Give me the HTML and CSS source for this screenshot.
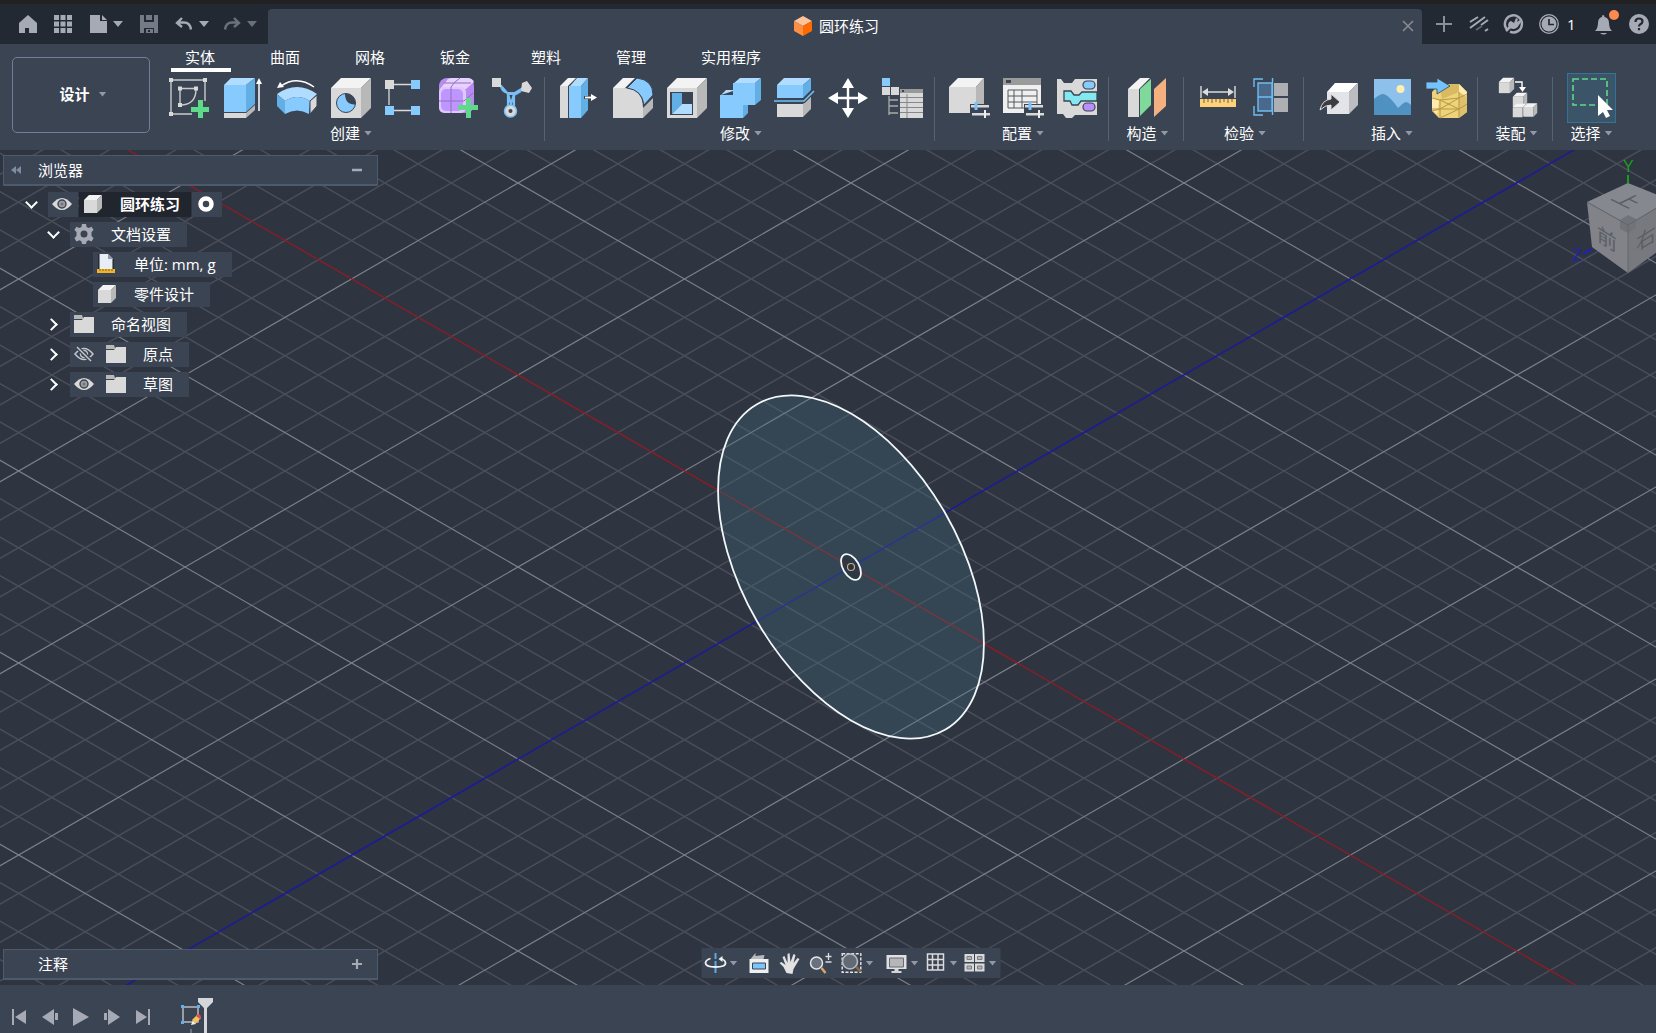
FILE: index.html
```html
<!DOCTYPE html>
<html lang="zh-CN">
<head>
<meta charset="utf-8">
<title>圆环练习</title>
<meta name="viewport" content="width=device-width, initial-scale=1">
<link rel="stylesheet" href="styles.css">
</head>
<body>
<svg class="defs" aria-hidden="true">
  <symbol id="cube" viewBox="0 0 20 20"><path class="g1" d="M1 6 6 1h13l-5 5z"/><path class="g2" d="M1 6h13v13H1z"/><path class="g3" d="M14 6l5-5v13l-5 5z"/></symbol>
  <symbol id="folder" viewBox="0 0 20 20"><path class="g3" d="M0 1h8l1 3v1H0z"/><path class="g2" d="M0 6h8l2-3h10v16H0z"/></symbol>
  <symbol id="eye" viewBox="0 0 20 20"><path class="g2" d="M0 10Q10-2 20 10 10 22 0 10z"/><circle cx="10" cy="10" r="4" fill="#9a9b9e" stroke="#3b4453" stroke-width="1.4"/><circle cx="10" cy="10" r="1.5" fill="#707680"/></symbol>
</svg>

<header class="titlebar">
  <div class="quick">
    <button aria-label="主页"><svg viewBox="0 0 18 18" width="18" height="18"><path d="M9 0 0 8v10h6v-5h4v5h8V8z" fill="#a6aab4"/></svg></button>
    <button aria-label="应用"><svg viewBox="0 0 18 18" width="18" height="18"><path d="M0 0h5v5H0zM6.500 0h5v5h-5zM13 0h5v5h-5zM0 6.500h5v5H0zM6.500 6.500h5v5h-5zM13 6.500h5v5h-5zM0 13h5v5H0zM6.500 13h5v5h-5zM13 13h5v5h-5z" fill="#a6aab4"/></svg></button>
    <button class="split" aria-label="文件"><svg viewBox="0 0 18 18" width="18" height="18"><path d="M1 0h10v6h7v12H1z" fill="#a6aab4"/><path d="M13 0l5 5h-5z" fill="#a6aab4"/></svg><span class="caret big"></span></button>
    <button aria-label="保存"><svg viewBox="0 0 18 18" width="18" height="18"><path d="M0 0h4v7h10V0h4v18h-4v-5H4v5H0zM6 0h6v5H6zM6 14h7v4H6z" fill="#747a86"/><path d="M8 15h2v2H8z" fill="#232933"/></svg></button>
    <div class="history">
      <button class="split" aria-label="撤消"><svg viewBox="0 0 18 18" width="18" height="18"><path d="M7 3 2 8l5 4M2 7.500h7q6 0 7 7" fill="none" stroke="#a6aab4" stroke-width="2.400"/></svg><span class="caret big"></span></button>
      <button class="split off" aria-label="重做"><svg viewBox="0 0 18 18" width="18" height="18"><path d="M11 3l5 5-5 4M16 7.500H9q-6 0-7 7" fill="none" stroke="#a6aab4" stroke-width="2.400"/></svg><span class="caret big"></span></button>
    </div>
  </div>
  <div class="doc-tab">
    <svg viewBox="0 0 18 20" width="18" height="20"><path d="M9 0l9 5-9 5-9-5z" fill="#ffc39c"/><path d="M0 5l9 5v10l-9-5z" fill="#ff8f45"/><path d="M18 5l-9 5v10l9-5z" fill="#ff6a00"/></svg>
    <h1>圆环练习</h1>
    <button class="close" aria-label="关闭"><svg viewBox="0 0 12 12" width="12" height="12"><path d="M1 1l10 10M11 1 1 11" stroke="#8d8d8f" stroke-width="1.500"/></svg></button>
  </div>
  <div class="status">
    <button aria-label="新建"><svg viewBox="0 0 20 20" width="20" height="20"><path d="M10 2v16M2 10h16" stroke="#8a8f9a" stroke-width="2"/></svg></button>
    <button aria-label="数据"><svg viewBox="0 0 20 20" width="20" height="20" stroke="#a6aab4" stroke-width="2" fill="none"><path d="M1 8l8-5M1 14 16 3M12 11l7-5M16 17l3-2"/><path d="M7 16l6-4" stroke="#5f6672"/></svg></button>
    <button aria-label="扩展"><svg viewBox="0 0 20 20" width="20" height="20"><path d="M3 15.500A8.500 8.500 0 1 1 6 17.700" fill="none" stroke="#a6aab4" stroke-width="2.500"/><path d="M2 17l5-5" stroke="#a6aab4" stroke-width="2.500"/><path d="M5 8l2-1 3 2 2-5 2 1-1 3 3-2 1 2-2 3q-2 4-6 4l-4-1-1-3z" fill="#a6aab4"/></svg></button>
    <button class="jobs" aria-label="作业状态 1"><svg viewBox="0 0 20 20" width="20" height="20"><circle cx="10" cy="10" r="9.300" fill="none" stroke="#a6aab4" stroke-width="1.300"/><circle cx="10" cy="10" r="7.500" fill="#a6aab4"/><path d="M10 5v5.500h5" stroke="#232933" stroke-width="1.700" fill="none"/></svg><span>1</span></button>
    <button class="bell" aria-label="通知"><svg viewBox="0 0 24 28" width="24" height="28"><path d="M13 5q1.500 0 1.500 2 4.500 1 4.500 6 0 5 3 8H5q3-3 3-8 0-5 4-6 0-2 1-2zM10 23h7q-3 3-7 0z" fill="#a6aab4"/><circle cx="24" cy="5" r="5" fill="#ff8a50"/></svg></button>
    <button aria-label="帮助"><svg viewBox="0 0 20 20" width="20" height="20"><circle cx="10" cy="10" r="10" fill="#a6aab4"/><path d="M6.500 8q0-3.500 3.500-3.500t3.500 3Q13.500 9 11 10.500q-1 .8-1 2M10 14v2.300" fill="none" stroke="#232933" stroke-width="2.200"/></svg></button>
  </div>
</header>

<section class="ribbon">
  <button class="workspace">设计<span class="caret"></span></button>
  <div class="ribbon-main">
    <nav class="tabs">
      <div class="tab-set"><button class="active">实体</button><button>曲面</button><button>网格</button><button>钣金</button></div>
      <div class="tab-set"><button>塑料</button><button>管理</button><button>实用程序</button></div>
    </nav>
    <div class="panels">
      <div class="panel">
        <div class="tools">
          <button aria-label="创建草图"><svg viewBox="0 0 40 40"><path d="M2 2h34v21M2 2v34h21M11 10.500h16M11 10.500V27M27 11q0 15-14 16" fill="none" stroke="#c9cacc" stroke-width="1.400"/><path class="g2" d="M0 0h4v4H0zM34 0h4v4h-4zM0 34h4v4H0zM9 8.500h4v4H9zM25 8.500h4v4h-4zM9 25h4v4H9z"/><path d="M29 22h5v7h6v5h-6v6h-5v-6h-7v-5h7z" fill="#5fd98a"/></svg></button>
          <button aria-label="拉伸"><svg viewBox="0 0 40 40"><path class="b1" d="M1 7l7-7h24l-9 7z"/><path class="b2" d="M1 7h22v27H1z"/><path class="b3" d="M23 7l9-7v26l-9 8z"/><path class="g2" d="M1 35h22v5H1z"/><path class="g3" d="M23 35l9-8v5l-9 8z"/><path d="M36 5v28" stroke="#fff" stroke-width="1.500"/><path d="M36 0l3 6h-6z" fill="#fff"/></svg></button>
          <button aria-label="旋转"><svg viewBox="0 0 40 40"><path d="M37 9Q20-3 4 8" fill="none" stroke="#fff" stroke-width="1.500"/><path d="M0 10l3-6 4 5z" fill="#fff"/><path class="b1" d="M0 16Q20 2 40 16l-7 7Q20 15 8 23z"/><path class="b2" d="M8 23q12-8 25 0l-1 13q-12-7-24 0z"/><path class="b3" d="M0 16l8 7v13l-8-8z"/><path class="g2" d="M33 23l7-6v11l-7 8z" stroke="#3b4453"/></svg></button>
          <button aria-label="孔"><svg viewBox="0 0 40 40"><path class="g1" d="M0 10 10 0h30L30 10z"/><path class="g2" d="M0 10h30v30H0z"/><path class="g3" d="M30 10 40 0v30L30 40z"/><circle class="b2" cx="15" cy="25" r="9.500" stroke="#3b4453"/><path d="M14 15.500a10 10 0 0 1 10.500 11Q14 27 14 15.500z" fill="#3b4453"/></svg></button>
          <button aria-label="阵列"><svg viewBox="0 0 40 40"><path d="M9 6.500h17M9 32.500h17M4 11v16" stroke="#d9d9d9" stroke-width="1.300"/><path class="g2" d="M0 2h9v9H0z"/><path class="b2" d="M26 2h9v9h-9zM0 28h9v9H0zM26 28h9v9h-9z"/></svg></button>
          <button aria-label="创建形状"><svg viewBox="0 0 40 40"><rect x="0" y="0" width="35" height="35" rx="8" fill="#b98af0"/><path d="M1 11 9 1q2-1 4-1h16q4 0 6 4l-8 7z" fill="#e7d2ff"/><rect x="0" y="9" width="27" height="26" rx="5" fill="#e0c8ff"/><rect x="2" y="11" width="22" height="22" rx="5" fill="#bf96ff"/><path d="M12 35V9Q15 4 21 0M0 23h25l9-8M5 5h27" fill="none" stroke="#8f70bb"/><path d="M27 20h5v7h7v5h-7v8h-5v-8h-8v-5h8z" fill="#5fd98a"/></svg></button>
          <button aria-label="衍生式设计"><svg viewBox="0 0 40 40"><path d="M8 7q0 6 7 8h7l8-5M9 9l6 7v14M28 13l-7 4v13M15 16l3 10 3-10z" fill="none" stroke="#79bff5" stroke-width="2.200"/><path class="g2" d="M-1 0h9v9h-9zM29 5l5-2 5 7-3 5-8-2z"/><circle cx="17.500" cy="33" r="6" class="g2" stroke="#79bff5" stroke-width="1.500"/><circle cx="17.500" cy="33" r="2" fill="#3b4453"/></svg></button>
        </div>
        <button class="panel-name">创建<span class="caret"></span></button>
      </div>
      <span class="rule"></span>
      <div class="panel">
        <div class="tools">
          <button aria-label="按拉"><svg viewBox="0 0 40 40"><path class="g1" d="M1 8l8-8h8l-8 8z"/><path class="g2" d="M1 8h8v32H1z"/><path class="b1" d="M11 8l7-8h11l-7 8z"/><path class="b2" d="M10 8h12v32H10z"/><path class="b3" d="M22 8l7-8v32l-7 8z"/><path d="M25 19.500h8v-3l6 3-6 3v-3" stroke="#3b4453" stroke-width="3" fill="none"/><path d="M26 19.500h8" stroke="#fff" stroke-width="1.800"/><path d="M32 16l6 3.500-6 3.500z" fill="#fff"/></svg></button>
          <button aria-label="圆角"><svg viewBox="0 0 40 40"><path class="g1" d="M0 10 10 0h12L12 10z"/><path class="g3" d="M30 30l10-10v10L30 40z"/><path class="g2" d="M0 10h10q20 0 20 20v10H0z"/><path class="b2" d="M14 10 24 0q16 2 16 17l-9 10Q29 12 14 10z" stroke="#3b4453"/></svg></button>
          <button aria-label="抽壳"><svg viewBox="0 0 40 40"><path class="g1" d="M0 10 10 0h30L30 10z"/><path class="g2" d="M0 10h30v30H0z"/><path class="g3" d="M30 10 40 0v30L30 40z"/><path d="M3 14h23v23H3z" fill="#3b4453"/><path class="b3" d="M5 15h10v11L5 36z"/><path class="b1" d="M5 36l10-10h10v10z"/></svg></button>
          <button aria-label="合并"><svg viewBox="0 0 40 40"><path class="b1" d="M0 17l5-5h8V5l6-5h21l-6 5v8H12z"/><path class="b2" d="M-1 17h13V5h22v22H22v13H-1z"/><path class="b3" d="M34 5l6-5v22l-6 5zM22 27h5v8l-5 5z"/></svg></button>
          <button aria-label="分割"><svg viewBox="0 0 40 40"><path class="b1" d="M2 7l7-7h27l-8 7z"/><path class="b2" d="M2 7h26v13H2z"/><path class="b3" d="M28 7l8-7v12l-8 8z"/><path class="g2" d="M2 26h26v13H2z"/><path class="g3" d="M28 26l8-8v13l-8 8z"/><path d="M-1 23h30l10-10" fill="none" stroke="#3b4453" stroke-width="4"/><path d="M-1 23h30l10-10" fill="none" stroke="#6fc0f7" stroke-width="1.600"/></svg></button>
          <button aria-label="移动"><svg viewBox="0 0 40 40"><path d="M19 3v34M3 20h32" stroke="#fff" stroke-width="2.400"/><path d="M19 0l6 10H13zM19 40l6-10H13zM-1 20l10-6v12zM39 20l-10-6v12z" fill="#fff"/></svg></button>
          <button aria-label="更改参数"><svg viewBox="0 0 40 40"><path class="b2" d="M-1 0h8v8h-8z"/><path class="g2" d="M-1 9h8v8h-8zM8 9h8v8H8zM17 11h23v29H17z"/><path d="M6 18v19M6 22h9M6 28h9M6 35h9" stroke="#aaa" stroke-width="1.300"/><path d="M17 11h23v4H17z" fill="#999"/><path d="M17 19.500h23M17 24.500h23M17 29.500h23M17 34.500h23M24 16v24" stroke="#85878b"/><path d="M19 12h2v2h-2z" fill="#3b4453"/></svg></button>
        </div>
        <button class="panel-name">修改<span class="caret"></span></button>
      </div>
      <span class="rule"></span>
      <div class="panel">
        <div class="tools">
          <button aria-label="配置设计"><svg viewBox="0 0 40 40"><path class="g1" d="M0 9 9 0h26l-8 9z"/><path class="g2" d="M0 9h27v26H0z"/><path class="g3" d="M27 9l8-9v27l-8 8z"/><path d="M21 26h19v15H21z" fill="#3b4453"/><path class="g2" d="M22 27h18v2.500H22zM23 35h18v2.500H23z"/><path d="M36 32v8" stroke="#eee" stroke-width="2"/><path d="M27 24v8" stroke="#79c3fc" stroke-width="3"/></svg></button>
          <button aria-label="配置表"><svg viewBox="0 0 40 40"><path fill="#efefef" d="M0 0h38v35H0z"/><path fill="#9a9a9a" d="M0 0h38v7H0z"/><path d="M3 2h5v3H3z" fill="#3b4453"/><path d="M5 12h29v18H5zM5 18h29M5 24h29M11 12v18M19 12v18" fill="none" stroke="#55595f"/><path d="M21 26h19v15H21z" fill="#3b4453"/><path class="g2" d="M22 27h18v2.500H22zM23 35h18v2.500H23z"/><path d="M36 32v8" stroke="#eee" stroke-width="2"/><path d="M27 24v8" stroke="#79c3fc" stroke-width="3"/></svg></button>
          <button aria-label="自动配置"><svg viewBox="0 0 40 40"><path class="g2" d="M0 1h4l3 4h8l3-4h22v36H18l-3 3H9l-3-4H0z"/><path d="M7 13h7l3 4h5l3-3h15v9H24l-3 4h-6l-2-4H7z" fill="#83e8f0" stroke="#3b4453" stroke-width="1.300"/><rect x="26" y="3" width="12" height="8" rx="4" class="b2" stroke="#3b4453" stroke-width="1.200"/><rect x="26" y="25" width="12" height="8" rx="4" fill="#b98fff" stroke="#3b4453" stroke-width="1.200"/></svg></button>
        </div>
        <button class="panel-name">配置<span class="caret"></span></button>
      </div>
      <span class="rule"></span>
      <div class="panel">
        <div class="tools">
          <button aria-label="构造平面"><svg viewBox="0 0 40 40"><path class="g1" d="M0 11 12 0h10L11 11z"/><path class="g2" d="M0 11h11v28H0z"/><path d="M12 11 23 1v26L12 38z" fill="#7fd99a"/><path d="M26 11 38 0v28L26 39z" fill="#f5b080"/></svg></button>
        </div>
        <button class="panel-name">构造<span class="caret"></span></button>
      </div>
      <span class="rule"></span>
      <div class="panel">
        <div class="tools">
          <button aria-label="测量"><svg viewBox="0 0 40 40"><path d="M3 8v12M37 8v12M6 14h28" stroke="#ddd" stroke-width="1.400"/><path d="M4 14l6-4v8zM36 14l-6-4v8z" fill="#ddd"/><path d="M2 21h36v8H2z" fill="#ffd27a"/><path d="M6 21v4M10 21v3M14 21v4M18 21v3M22 21v4M26 21v3M30 21v4M34 21v3" stroke="#6f6040"/></svg></button>
          <button aria-label="干涉"><svg viewBox="0 0 40 40"><path d="M6 5h14v28H6z" fill="#49688a"/><path d="M6 5h14v28H6zM6 19h14M11 1H2v8M2 28v9h9M20.500 0v37" fill="none" stroke="#6dbcf4" stroke-width="1.400"/><path d="M22 5h14v13H22zM22 20h14v14H22z" fill="#aeafb3"/></svg></button>
        </div>
        <button class="panel-name">检验<span class="caret"></span></button>
      </div>
      <span class="rule"></span>
      <div class="panel">
        <div class="tools">
          <button aria-label="插入衍生"><svg viewBox="0 0 40 40"><path fill="#fff" d="M9 14l8-9h23l-9 9z"/><path fill="#e3e4e8" d="M9 14h22v22H9z"/><path fill="#bcbdc0" d="M31 14l9-9v22l-9 9z"/><path d="M2 32q2-10 11-11v-5l9 8-9 8v-5q-6 0-11 5z" fill="#3a3c42" stroke="#dcdde0"/></svg></button>
          <button aria-label="贴图"><svg viewBox="0 0 40 40"><path d="M2 1h37v36H2z" fill="#8dc0ea"/><path d="M2 21q6-5 9-5 5 0 15 14 6-6 8-6 2 0 5 3v10H2z" fill="#4f91c1"/><circle cx="28.500" cy="11" r="4" fill="#ffeeb0"/></svg></button>
          <button aria-label="插入网格"><svg viewBox="0 0 40 40"><path d="M13 6h20l8 8v20l-8 6H13l-7-7V14z" fill="#eed37a"/><path d="M13 6h20v8l-17 7z" fill="#d7ba62"/><path d="M33 6l8 8-2 5-6-5zM6 19l7 4-2 13-5-4z" fill="#ffebb0"/><path d="M33 14l8 5v15l-8 6z" fill="#dec16a"/><path d="M6 20l8 2 19-2 8-4M6 31h27l8-5M14 22v18M33 14v26M14 22l19 9-19 9M33 20 14 31l-8 2" fill="none" stroke="#b79845"/><path d="M0 4h11V0l13 8-13 8v-5H0z" fill="#73c3ff" stroke="#3b4453" stroke-width=".8"/></svg></button>
        </div>
        <button class="panel-name">插入<span class="caret"></span></button>
      </div>
      <span class="rule"></span>
      <div class="panel">
        <div class="tools">
          <button aria-label="装配"><svg viewBox="0 0 40 40"><use href="#cube" x="1" y="-1" width="17" height="17"/><use href="#cube" x="15" y="14" width="16" height="16"/><use href="#cube" x="15" y="25" width="15" height="15"/><use href="#cube" x="26" y="24" width="15" height="16"/><path d="M18 4h7v8" fill="none" stroke="#fff" stroke-width="1.400"/><path d="M22 9h7l-3.500 5z" fill="#fff"/></svg></button>
        </div>
        <button class="panel-name">装配<span class="caret"></span></button>
      </div>
      <span class="rule"></span>
      <div class="panel">
        <div class="tools">
          <button class="picked" aria-label="选择"><svg viewBox="0 0 40 40"><path d="M1 1h34v26H1z" fill="none" stroke="#5fd98a" stroke-width="1.600" stroke-dasharray="6 3"/><path d="M26 17v21l5-4 3 6 4-2-3-6h6z" fill="#fff"/></svg></button>
        </div>
        <button class="panel-name">选择<span class="caret"></span></button>
      </div>
    </div>
  </div>
</section>

<main class="viewport">
  <svg class="scene" viewBox="-851 -417 1656 835" preserveAspectRatio="xMidYMid slice" aria-label="草图视图">
    <g id="minor"></g>
    <g id="major"></g>
    <path class="axis-x" d="M-1000-577 1000 577"/>
    <path class="axis-z" d="M-1000 577 1000-577"/>
    <circle class="profile" r="153.500" transform="matrix(.866 .5 0 1 0 0)"/>
    <circle class="profile hub" r="11.500" transform="matrix(.866 .5 0 1 0 0)"/>
    <circle class="origin" r="3.500"/>
  </svg>

  <svg class="viewcube" viewBox="0 0 116 140" width="116" height="140" aria-label="视图立方体">
    <path d="M88 38V30" stroke="#16a01e" stroke-width="2"/>
    <path d="M43 109l9-5" stroke="#2222b4" stroke-width="2.500"/>
    <text class="axis-label y" x="83" y="27">Y</text>
    <text class="axis-label z" x="32" y="116">Z</text>
    <path d="M88 38l42 17-42 25-41-23z" fill="#85888e"/>
    <path d="M47 57l41 23v48l-36-26z" fill="#818388"/>
    <path d="M130 55 88 80v48l36-26z" fill="#77797e"/>
    <path d="M80 75l8-5 8 4v9l-8 5-8-4z" fill="#70737a"/>
    <path d="M47 57l41 23 42-25M88 80v48" fill="none" stroke="#63666c"/>
    <text class="face" transform="translate(57 95) skewY(32)">前</text>
    <text class="face" transform="translate(96 107) skewY(-32)">右</text>
    <text class="face" transform="matrix(1 .5 -1 .5 70 54)">上</text>
  </svg>

  <div class="browser">
    <header class="dock">
      <svg viewBox="0 0 10 8" width="10" height="8"><path d="M5 0v8L0 4zM10 0v8L5 4z" fill="#7d8ba3"/></svg>
      <h2>浏览器</h2>
      <button aria-label="折叠"><svg viewBox="0 0 12 12" width="12" height="12"><path d="M1 6h10" stroke="#a6aab4" stroke-width="2.500"/></svg></button>
    </header>
    <ul class="tree">
      <li class="l0"><button class="twist open" aria-label="收起"></button>
        <span class="cell"><svg><use href="#eye"/></svg></span><span class="cell root"><svg><use href="#cube"/></svg><b>圆环练习</b></span><span class="cell"><svg viewBox="0 0 20 20"><circle cx="10" cy="10" r="5.500" fill="none" stroke="#fff" stroke-width="4.500"/></svg></span></li>
      <li class="l1"><button class="twist open" aria-label="收起"></button>
        <span class="cell"><svg viewBox="0 0 20 20"><path fill="#a6aab4" fill-rule="evenodd" d="M8 0h4l.6 3 2 1 3-1.300 2 3.400L17.500 8v4l2.100 2-2 3.400-3-1.200-2 1-.6 2.800H8l-.6-2.800-2-1-3 1.200-2-3.400 2.100-2V8L.4 6.100l2-3.400 3 1.300 2-1zm2 6.500a3.500 3.500 0 1 0 0 7 3.500 3.500 0 0 0 0-7z"/></svg><span>文档设置</span></span></li>
      <li class="l2"><span class="cell"><svg viewBox="0 0 20 20"><path d="M2 0h9l5 5v10H2z" fill="#e9edf6"/><path d="M11 0v5h5z" fill="#8f99ad"/><path d="M2 0v15M16 5v10" stroke="#15181f"/><path d="M0 15h18v4H0z" fill="#f0b429"/><path d="M3 15v2M6 15v2M9 15v2M12 15v2M15 15v2" stroke="#8a6410"/></svg><span>单位: mm, g</span></span></li>
      <li class="l2"><span class="cell"><svg><use href="#cube"/></svg><span>零件设计</span></span></li>
      <li class="l1"><button class="twist" aria-label="展开"></button>
        <span class="cell"><svg><use href="#folder"/></svg><span>命名视图</span></span></li>
      <li class="l1"><button class="twist" aria-label="展开"></button>
        <span class="cell pair"><svg viewBox="0 0 20 20" fill="none" stroke="#c3c5ca" stroke-width="1.500"><path d="M1 10Q10-1 19 10 10 21 1 10z"/><circle cx="10" cy="10" r="3.500"/><path d="M3 3l14 14" stroke="#3b4453" stroke-width="4"/><path d="M3 3l14 14"/></svg><svg><use href="#folder"/></svg><span>原点</span></span></li>
      <li class="l1"><button class="twist" aria-label="展开"></button>
        <span class="cell pair"><svg><use href="#eye"/></svg><svg><use href="#folder"/></svg><span>草图</span></span></li>
    </ul>
  </div>

  <div class="comments dock">
    <h2>注释</h2>
    <button aria-label="添加注释"><svg viewBox="0 0 12 12" width="12" height="12"><path d="M1 6h10M6 1v10" stroke="#a6aab4" stroke-width="2.200"/></svg></button>
  </div>

  <div class="navbar">
    <div class="nav-set view-tools">
      <button class="split" aria-label="动态观察"><svg viewBox="0 0 20 20"><path d="M10 0v20" stroke="#5aa9e6" stroke-width="2" stroke-dasharray="6 2 5 2"/><path d="M5 5.500Q0 7 0 10q0 4 10 4t10-4q0-3-5-4.500" fill="none" stroke="#f2f2f2" stroke-width="1.800"/><path d="M17 3l-4 3 4 3z" fill="#f2f2f2"/></svg><span class="caret"></span></button>
      <button aria-label="观察方向"><svg viewBox="0 0 20 20"><path d="M2 6l5-6v3l9-1-1 4z" fill="#b9babd"/><path d="M1 6h19v14H1z" fill="#efefef"/><path d="M4 10h13v6H4z" fill="#7cc5fc" stroke="#3b4453"/></svg></button>
      <button aria-label="平移"><svg viewBox="0 0 20 20"><path d="M7 20 4 14 0 10l2-1 4 3L3 4l2-1 3 7V1l2-1 1 9 3-8 2 1-2 8 4-5 2 1-6 10-1 5z" fill="#e2e2e2"/></svg></button>
      <button aria-label="缩放"><svg viewBox="0 0 20 20"><circle cx="6" cy="10" r="6" fill="#687180" stroke="#e6e6e6" stroke-width="1.500"/><path d="M11 15l4 5" stroke="#dba468" stroke-width="2.500"/><path d="M18 0v7M15 3.500h6M15 9h6" stroke="#ddd" stroke-width="1.300"/></svg></button>
      <button class="split" aria-label="缩放窗口"><svg viewBox="0 0 20 20"><path d="M.7.700h18.600v18.600H.7z" fill="none" stroke="#e6e6e6" stroke-width="1.400" stroke-dasharray="3 1.500"/><circle cx="8.500" cy="8.500" r="7.500" fill="#626a75" stroke="#b9bbbe" stroke-width="1.600"/><path d="M15 14l4 5" stroke="#8a6a3e" stroke-width="2.500"/></svg><span class="caret"></span></button>
    </div>
    <div class="nav-set">
      <button class="split" aria-label="显示设置"><svg viewBox="0 0 20 20"><path d="M0 2h20v14H0z" fill="#e0e0e0"/><path d="M3 5h14v9H3z" fill="#b5b6b8" stroke="#666b74"/><path d="M8 16h4v2h3v2H5v-2h3z" fill="#d5d5d5"/></svg><span class="caret"></span></button>
      <button class="split" aria-label="栅格和捕捉"><svg viewBox="0 0 20 20"><path d="M2 1h16v16H2zM7 1v16M12.500 1v16M2 6.500h16M2 12h16" fill="none" stroke="#dcdcdc" stroke-width="1.500"/></svg><span class="caret"></span></button>
      <button class="split" aria-label="视口"><svg viewBox="0 0 20 20"><path d="M0 1h9.500v8H0zM10.500 1H20v8h-9.500zM0 10.500h9.500v8H0zM10.500 10.500H20v8h-9.500z" fill="#d9d9d9"/><path d="M2.500 3.500h4.500v3H2.500zM13 3.500h4.500v3H13zM2.500 13h4.500v3H2.500zM13 13h4.500v3H13z" fill="#b5b5b5" stroke="#777b82"/></svg><span class="caret"></span></button>
    </div>
  </div>
</main>

<footer class="timeline">
  <div class="playback">
    <button aria-label="起点"><svg viewBox="0 0 16 18"><path d="M1 1h2v16H1zM15 2v14L4 9z"/></svg></button>
    <button aria-label="上一步"><svg viewBox="0 0 16 18"><path d="M12 1v16L0 9zM13 5h3v7h-3z"/></svg></button>
    <button aria-label="播放"><svg viewBox="0 0 16 18"><path d="M0 0l16 9-16 9z"/></svg></button>
    <button aria-label="下一步"><svg viewBox="0 0 16 18"><path d="M4 1v16l12-8zM0 5h3v7H0z"/></svg></button>
    <button aria-label="终点"><svg viewBox="0 0 16 18"><path d="M13 1h2v16h-2zM1 2v14l11-7z"/></svg></button>
  </div>
  <button class="feature" aria-label="草图1"><svg viewBox="0 0 34 35" width="34" height="35"><path d="M2 9h15v15H2z" fill="none" stroke="#b9bbc0" stroke-width="1.500"/><path d="M0 7h3v3H0zM16 7h3v3h-3zM0 23h3v3H0z" fill="#5db2f2"/><path d="M10 27l2-5 3 4z" fill="#f4f4f4"/><path d="M11 22l5-5 4 3-6 6z" fill="#f2c463"/><path d="M15 18l3-2 2 2-1 3z" fill="#e5484d"/><path d="M10 31v4" stroke="#6a7382" stroke-width="2"/><path d="M17 0h15v4l-6 6v25h-3V10l-6-6z" fill="#d5d6da"/></svg></button>
</footer>
<script src="app.js"></script>
</body>
</html>
```
FILE: styles.css
```css
* { box-sizing: border-box; }

:root {
  --panel: #3b4453;
  --canvas: #2e3440;
  --dark: #232933;
  --edge: #4c5a6b;
  --muted: #a6aab4;
}

html, body { height: 100%; }

body {
  margin: 0;
  display: flex;
  flex-direction: column;
  background: var(--canvas);
  color: #fff;
  font: 15px/20px "Open Sans", "Noto Sans CJK SC", sans-serif;
  overflow: hidden;
}

button {
  display: flex;
  align-items: center;
  justify-content: center;
  padding: 0;
  border: 0;
  background: none;
  color: inherit;
  font: inherit;
  white-space: nowrap;
  flex: none;
}

h1, h2 { margin: 0; font: inherit; white-space: nowrap; }
svg { display: block; flex: none; overflow: visible; }
.defs { position: absolute; width: 0; height: 0; }

.g1 { fill: #f3f3f3; }
.g2 { fill: #d9d9d9; }
.g3 { fill: #b8b8b8; }
.b1 { fill: #b0ddff; }
.b2 { fill: #87cafe; }
.b3 { fill: #62afe5; }

.caret {
  width: 8px;
  height: 5px;
  background: #9298a4;
  clip-path: polygon(0 0, 100% 0, 50% 100%);
}
.caret.big { width: 10px; height: 6px; background: var(--muted); }

/* Title bar */
.titlebar {
  display: flex;
  flex: none;
  height: 44px;
  border-top: 4px solid #212121;
  background: var(--dark);
}
.quick { display: flex; align-items: center; gap: 17px; padding: 0 11px 0 19px; }
.history { display: flex; gap: 14px; }
.split { gap: 6px; }
.off { opacity: .55; }
.doc-tab {
  display: flex;
  flex: 1;
  align-items: center;
  justify-content: center;
  gap: 7px;
  margin-top: 5px;
  padding: 0 8px 2px 10px;
  border-radius: 4px 4px 0 0;
  background: var(--panel);
}
.doc-tab > svg { margin-left: auto; }
.close { width: 12px; margin-left: auto; }
.status { display: flex; align-items: center; gap: 15px; padding: 0 7px 0 12px; }
.jobs { gap: 8px; }
.jobs span { width: 8px; }

/* Ribbon */
.ribbon {
  display: flex;
  flex: none;
  gap: 19px;
  padding: 0 0 8px 12px;
  background: var(--panel);
}
.workspace {
  width: 138px;
  height: 76px;
  margin-top: 13px;
  padding: 0 0 2px 4px;
  gap: 9px;
  border: 1px solid #6f7f9b;
  border-radius: 5px;
  font-weight: 700;
}
.tabs { display: flex; gap: 31px; padding-left: 2px; }
.tab-set { display: flex; gap: 25px; }
.tabs button { height: 28px; padding: 0 16px 2px 14px; }
.tabs .active { box-shadow: inset 0 -4px #fff; }
.panels { display: flex; }
.panel { display: flex; flex-direction: column; align-items: center; min-width: 49px; }
.tools { display: flex; align-items: center; gap: 14px; height: 52px; }
.tools svg { width: 40px; height: 40px; }
.panel-name { height: 18px; gap: 4px; }
.rule { width: 1px; margin: 5px 14px 1px 11px; background: #566272; }
.picked { width: 49px; height: 50px; border: 1px solid #2e7597; background: #3b5468; }

/* Viewport */
.viewport { position: relative; flex: 1; min-height: 0; overflow: hidden; }
.scene { position: absolute; inset: 0; width: 100%; height: 100%; }
#minor { stroke: #4a4e59; stroke-width: 1.5; }
#major { stroke: #7b7f88; stroke-width: 1.2; }
.axis-x { stroke: #8c1d25; stroke-width: 1.4; }
.axis-z { stroke: #1c1c96; stroke-width: 1.6; }
.profile {
  fill: rgba(66, 110, 125, .32);
  stroke: #f2f7fa;
  stroke-width: 1.8;
  vector-effect: non-scaling-stroke;
}
.hub { fill: rgba(35, 41, 51, .5); }
.origin { fill: #33302f; stroke: #b9b09c; stroke-width: 1.2; }

.viewcube { position: absolute; top: -5px; right: 0; }
.axis-label { font: 16px "Liberation Sans", sans-serif; }
.y { fill: #16a01e; }
.z { fill: #2222b4; }
.face { font: 20px "Noto Sans CJK SC", sans-serif; fill: #5b5e65; }

.dock {
  display: flex;
  align-items: center;
  width: 375px;
  height: 31px;
  padding: 0 14px 0 7px;
  border: 1px solid var(--edge);
  border-bottom-width: 2px;
  background: var(--panel);
}
.dock h2 { margin-left: 17px; }
.dock button { margin-left: auto; }
.browser { position: absolute; top: 5px; left: 3px; }
.comments { position: absolute; bottom: 5px; left: 3px; padding-left: 17px; }

.tree { list-style: none; margin: 3px 0 0; padding: 0; }
.tree li { display: flex; align-items: center; height: 30px; }
.l0 { padding-left: 17px; }
.l1 { padding-left: 39px; }
.l2 { padding-left: 90px; }
.twist { width: 22px; height: 20px; margin-right: 6px; }
.twist::before {
  content: "";
  width: 7px;
  height: 7px;
  border: solid #fff;
  border-width: 2px 2px 0 0;
  transform: translateX(-2px) rotate(45deg);
}
.twist.open::before { transform: translateY(-2px) rotate(135deg); }
.cell {
  display: flex;
  align-items: center;
  height: 25px;
  margin-right: 1px;
  padding: 0 6px 0 4px;
  background: var(--panel);
  white-space: nowrap;
}
.cell svg { width: 20px; height: 20px; }
.cell span { padding: 0 10px 0 17px; }
.root { background: #20252e; }
.root b { padding: 0 5px 0 17px; }
.pair { gap: 12px; }
.pair span { padding-left: 5px; }

.navbar {
  position: absolute;
  bottom: 7px;
  left: calc(50% + 23px);
  display: flex;
  align-items: center;
  justify-content: space-between;
  width: 299px;
  height: 30px;
  padding: 0 4px;
  background: var(--panel);
  transform: translateX(-50%);
}
.nav-set { display: flex; gap: 7px; }
.view-tools { gap: 11px; }
.navbar .split { gap: 4px; }
.navbar svg { width: 20px; height: 20px; }

/* Timeline */
.timeline {
  display: flex;
  align-items: flex-start;
  flex: none;
  gap: 30px;
  height: 48px;
  padding: 13px 0 0 11px;
  background: var(--panel);
}
.playback { display: flex; gap: 15px; padding-top: 10px; }
.playback svg { width: 16px; height: 18px; fill: var(--muted); }
```
FILE: app.js
```js
// Isometric construction grid: one heavy line after every four light ones.
const NS = "http://www.w3.org/2000/svg";
const STEP = 38.4;
const RUN = 1200;
const RISE = RUN * 0.5766;

for (let i = -40; i <= 40; i++) {
  if (i === 0) continue;
  const y = i * STEP;
  const layer = document.getElementById(i % 5 ? "minor" : "major");
  const path = document.createElementNS(NS, "path");
  path.setAttribute("d", `M${-RUN} ${y - RISE} ${RUN} ${y + RISE}M${-RUN} ${y + RISE} ${RUN} ${y - RISE}`);
  layer.append(path);
}
```
